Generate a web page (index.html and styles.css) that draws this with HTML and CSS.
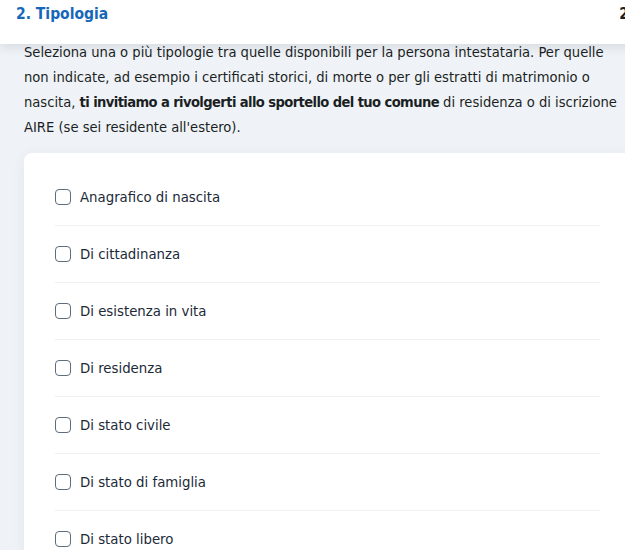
FILE: index.html
```html
<!DOCTYPE html>
<html lang="it">
<head>
<meta charset="utf-8">
<title>Tipologia</title>
<link rel="stylesheet" href="styles.css">
</head>
<body>
<div class="page">
  <header class="step-header">
    <h2 class="step-title">2. Tipologia</h2>
    <span class="step-count">2/2</span>
  </header>
  <main class="content">
    <p class="intro">Seleziona una o più tipologie tra quelle disponibili per la persona intestataria. Per quelle non indicate, ad esempio i certificati storici, di morte o per gli estratti di matrimonio o nascita, <strong>ti invitiamo a rivolgerti allo sportello del tuo comune</strong> di residenza o di iscrizione AIRE (se sei residente all'estero).</p>
    <div class="card">
      <ul class="options">
        <li class="option"><label><span class="box"></span>Anagrafico di nascita</label></li>
        <li class="option"><label><span class="box"></span>Di cittadinanza</label></li>
        <li class="option"><label><span class="box"></span>Di esistenza in vita</label></li>
        <li class="option"><label><span class="box"></span>Di residenza</label></li>
        <li class="option"><label><span class="box"></span>Di stato civile</label></li>
        <li class="option"><label><span class="box"></span>Di stato di famiglia</label></li>
        <li class="option"><label><span class="box"></span>Di stato libero</label></li>
      </ul>
    </div>
  </main>
</div>
</body>
</html>
```
FILE: styles.css
```css
html, body {
  margin: 0;
  padding: 0;
  overflow: hidden;
}
body {
  background: #eff3f7;
  font-family: "DejaVu Sans Condensed", "Liberation Sans", sans-serif;
  color: #1b1f24;
}
.page {
  width: 655px;
}
.step-header {
  position: relative;
  z-index: 2;
  height: 44px;
  margin-bottom: -5px;
  background: #ffffff;
  box-shadow: 0 3px 10px rgba(30, 40, 60, 0.12);
  display: flex;
  justify-content: space-between;
  align-items: flex-start;
  padding: 2px 12px 0 16px;
  box-sizing: border-box;
}
.step-title {
  margin: 0;
  font-size: 15.5px;
  line-height: 24px;
  font-weight: 700;
  color: #1767b9;
}
.step-count {
  font-size: 15px;
  line-height: 24px;
  font-weight: 700;
  color: #1b1f24;
}
.content {
  padding: 0 24px;
}
.intro {
  margin: 0 0 14px 0;
  font-size: 14.6px;
  line-height: 25px;
  color: #1b1f24;
}
.intro strong {
  font-weight: 700;
  letter-spacing: -0.6px;
}
.card {
  background: #ffffff;
  border-radius: 8px;
  box-shadow: 0 2px 14px rgba(30, 50, 80, 0.06);
  padding: 16px 31px 0 31px;
}
.options {
  list-style: none;
  margin: 0;
  padding: 0;
}
.option {
  padding: 16px 0;
  border-bottom: 1px solid #eef0f2;
}
.option label {
  display: flex;
  align-items: center;
  font-size: 14.8px;
  line-height: 24px;
  color: #1c2a38;
}
.box {
  width: 14px;
  height: 14px;
  border: 1.5px solid #5f6c79;
  border-radius: 4px;
  margin-right: 9px;
  flex: none;
}
```
